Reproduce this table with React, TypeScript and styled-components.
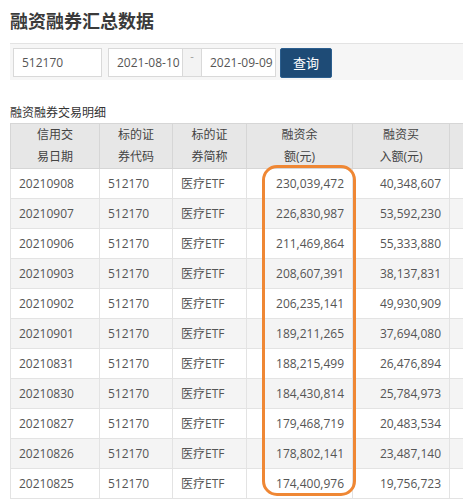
import React from "react";
import styled, { createGlobalStyle } from "styled-components";

const Global = createGlobalStyle`
  html, body { margin: 0; padding: 0; background: #fff; overflow: hidden; }
  body { font-family: "Open Sans", "Noto Sans CJK SC", sans-serif; color: #555; }
`;

const Page = styled.div`
  box-sizing: border-box;
  padding-left: 10px;
  width: 463px;
  overflow: hidden;
`;

const Title = styled.h1`
  margin: 0;
  padding: 9px 0 10px;
  font-size: 18px;
  line-height: 24px;
  font-weight: 700;
  color: #3a3a3a;
  border-bottom: 1px solid #e3e3e3;
`;

const FormBar = styled.div`
  display: flex;
  align-items: flex-start;
  background: #f6f6f6;
  padding: 4px 3px;
  height: 28px;
  gap: 6px;
`;

const Input = styled.div<{ $w: number }>`
  box-sizing: border-box;
  width: ${(p) => p.$w}px;
  height: 29px;
  border: 1px solid #d9d9d9;
  background: #fff;
  font-size: 12px;
  line-height: 27px;
  padding-left: 8px;
  color: #555;
  white-space: nowrap;
  overflow: hidden;
`;

const DateGroup = styled.div`
  display: flex;
`;

const Addon = styled.div`
  box-sizing: border-box;
  width: 18px;
  height: 29px;
  border-top: 1px solid #d9d9d9;
  border-bottom: 1px solid #d9d9d9;
  background: #f3f3f3;
  color: #999;
  font-size: 11px;
  text-align: center;
  line-height: 14px;
`;

const Button = styled.button`
  box-sizing: border-box;
  margin-left: -2px;
  width: 52px;
  height: 30px;
  border: 1px solid #2c5f8f;
  border-radius: 2px;
  background: #1e4b76;
  color: #fff;
  font-family: "Noto Sans CJK SC", sans-serif;
  font-size: 13px;
  line-height: 26px;
  padding: 0;
`;

const SubTitle = styled.div`
  margin-top: 25px;
  margin-bottom: 2px;
  font-size: 12px;
  line-height: 16px;
  color: #333;
`;

const TableWrap = styled.div`
  position: relative;
  overflow: hidden;
`;

const Table = styled.table`
  border-collapse: collapse;
  font-size: 12px;
  color: #555;
`;

const Th = styled.th<{ $w: number }>`
  width: ${(p) => p.$w}px;
  min-width: ${(p) => p.$w}px;
  box-sizing: border-box;
  height: 45px;
  padding: 0;
  background: #e7e7e7;
  border: 1px solid #d6d6d6;
  font-weight: 400;
  color: #444;
  line-height: 22px;
  text-align: center;
`;

const Tr = styled.tr<{ $alt: boolean }>`
  background: ${(p) => (p.$alt ? "#f4f4f4" : "#fff")};
`;

const Td = styled.td<{ $right?: boolean }>`
  height: 29px;
  padding: 0 8px;
  border: 1px solid #e3e3e3;
  text-align: ${(p) => (p.$right ? "right" : "left")};
  white-space: nowrap;
  line-height: 16px;
`;

const Highlight = styled.div`
  position: absolute;
  left: 252px;
  top: 42px;
  width: 94px;
  height: 331px;
  box-sizing: border-box;
  border: 3px solid #ef8734;
  border-radius: 15px;
  pointer-events: none;
`;

const rows = [
  ["20210908", "230,039,472", "40,348,607"],
  ["20210907", "226,830,987", "53,592,230"],
  ["20210906", "211,469,864", "55,333,880"],
  ["20210903", "208,607,391", "38,137,831"],
  ["20210902", "206,235,141", "49,930,909"],
  ["20210901", "189,211,265", "37,694,080"],
  ["20210831", "188,215,499", "26,476,894"],
  ["20210830", "184,430,814", "25,784,973"],
  ["20210827", "179,468,719", "20,483,534"],
  ["20210826", "178,802,141", "23,487,140"],
  ["20210825", "174,400,976", "19,756,723"],
];

export default function App() {
  return (
    <>
      <Global />
      <Page>
        <Title>融资融券汇总数据</Title>
        <FormBar>
          <Input $w={89}>512170</Input>
          <DateGroup>
            <Input $w={75}>2021-08-10</Input>
            <Addon>-</Addon>
            <Input $w={75}>2021-09-09</Input>
          </DateGroup>
          <Button>查询</Button>
        </FormBar>
        <SubTitle>融资融券交易明细</SubTitle>
        <TableWrap>
          <Table>
            <thead>
              <tr>
                <Th $w={89}>信用交<br />易日期</Th>
                <Th $w={73}>标的证<br />券代码</Th>
                <Th $w={74}>标的证<br />券简称</Th>
                <Th $w={106}>融资余<br />额(元)</Th>
                <Th $w={97}>融资买<br />入额(元)</Th>
                <Th $w={97}></Th>
              </tr>
            </thead>
            <tbody>
              {rows.map((r, i) => (
                <Tr key={r[0]} $alt={i % 2 === 1}>
                  <Td>{r[0]}</Td>
                  <Td>512170</Td>
                  <Td>医疗ETF</Td>
                  <Td $right>{r[1]}</Td>
                  <Td $right>{r[2]}</Td>
                  <Td $right></Td>
                </Tr>
              ))}
            </tbody>
          </Table>
          <Highlight />
        </TableWrap>
      </Page>
    </>
  );
}
